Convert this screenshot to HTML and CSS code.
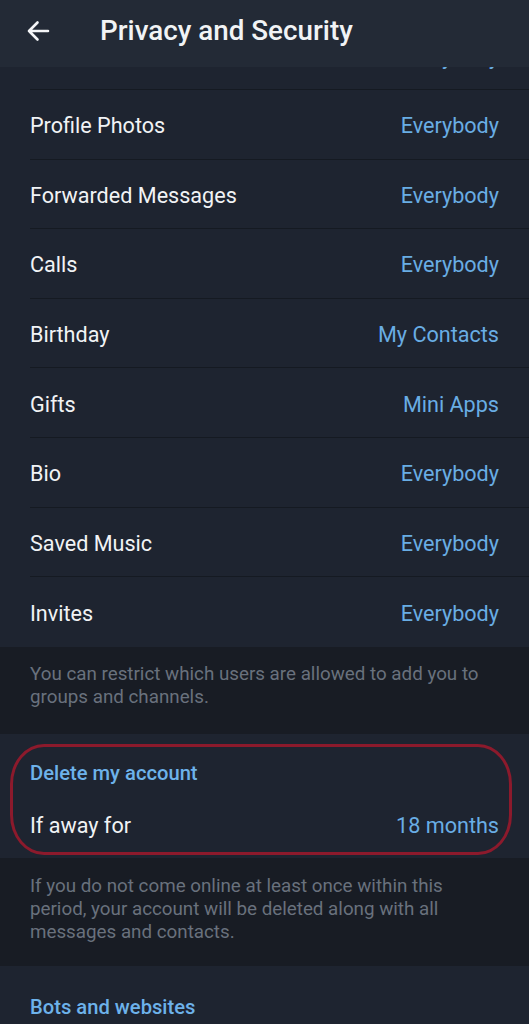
FILE: index.html
```html
<!DOCTYPE html>
<html lang="en">
<head>
    <meta charset="UTF-8">
    <title>Privacy and Security</title>
    <link rel="stylesheet" href="styles.css">
</head>
<body>

<div class="topbar">
    <svg class="back" width="26" height="26" viewBox="0 0 26 26">
        <path d="M23 13H4M12.5 4.5L4 13l8.5 8.5" fill="none" stroke="#f4f5f7" stroke-width="2.6" stroke-linecap="round" stroke-linejoin="round"/>
    </svg>
    <div class="title">Privacy and Security</div>
</div>

<div class="section">
    <div class="clip">
        <div class="row">
            <span class="label"></span>
            <span class="value">Everybody</span>
        </div>
    </div>
    <div class="row"><span class="label">Profile Photos</span><span class="value">Everybody</span></div>
    <div class="row"><span class="label">Forwarded Messages</span><span class="value">Everybody</span></div>
    <div class="row"><span class="label">Calls</span><span class="value">Everybody</span></div>
    <div class="row"><span class="label">Birthday</span><span class="value">My Contacts</span></div>
    <div class="row"><span class="label">Gifts</span><span class="value">Mini Apps</span></div>
    <div class="row"><span class="label">Bio</span><span class="value">Everybody</span></div>
    <div class="row"><span class="label">Saved Music</span><span class="value">Everybody</span></div>
    <div class="row last"><span class="label">Invites</span><span class="value">Everybody</span></div>
</div>

<div class="info first-info">
    You can restrict which users are allowed to add you to groups and channels.
</div>

<div class="section marked">
    <div class="head">Delete my account</div>
    <div class="row last"><span class="label">If away for</span><span class="value">18 months</span></div>
    <div class="mark"></div>
</div>

<div class="info second-info">
    If you do not come online at least once within this period, your account will be deleted along with all messages and contacts.
</div>

<div class="section">
    <div class="head bots">Bots and websites</div>
</div>

</body>
</html>
```

FILE: styles.css
```css
body {
  margin: 0;
  width: 529px;
  height: 1024px;
  overflow: hidden;
  background: #181c24;
  font-family: Roboto, "Noto Sans", sans-serif;
  color: #f1f3f5;
}
.topbar {
  height: 67px;
  background: #232a36;
  display: flex;
  align-items: center;
  padding-left: 25px;
  padding-bottom: 6px;
  box-sizing: border-box;
}
.back {
  margin-right: 49px;
}
.title {
  font-size: 27.8px;
  font-weight: 500;
}
.section {
  background: #1e2430;
}
.clip {
  height: 23px;
  overflow: hidden;
  display: flex;
  flex-direction: column;
  justify-content: flex-end;
}
.clip .row {
  flex-shrink: 0;
}
.row {
  height: 69.6px;
  box-sizing: border-box;
  margin-left: 30px;
  padding-right: 30px;
  padding-top: 3px;
  border-bottom: 1px solid #151a22;
  display: flex;
  align-items: center;
  justify-content: space-between;
  font-size: 21.6px;
}
.row.last {
  border-bottom: none;
}
.value {
  color: #69ade4;
}
.info {
  background: #181c24;
  color: #69717d;
  font-size: 18.8px;
  line-height: 23px;
  padding: 16px 40px 25px 30px;
}
.second-info {
  padding-top: 17px;
  padding-bottom: 22px;
  padding-right: 70px;
}
.head {
  color: #6db2ea;
  font-size: 20.2px;
  font-weight: 500;
  padding: 27px 30px 6px;
  line-height: 24px;
}
.bots {
  padding-top: 29px;
  height: 26px;
}
.marked {
  position: relative;
}
.marked .row {
  height: 67px;
}
.mark {
  position: absolute;
  left: 10px;
  top: 10px;
  width: 502px;
  height: 111px;
  box-sizing: border-box;
  border: 3px solid #8c1a2c;
  border-radius: 34px / 40px;
}
```
